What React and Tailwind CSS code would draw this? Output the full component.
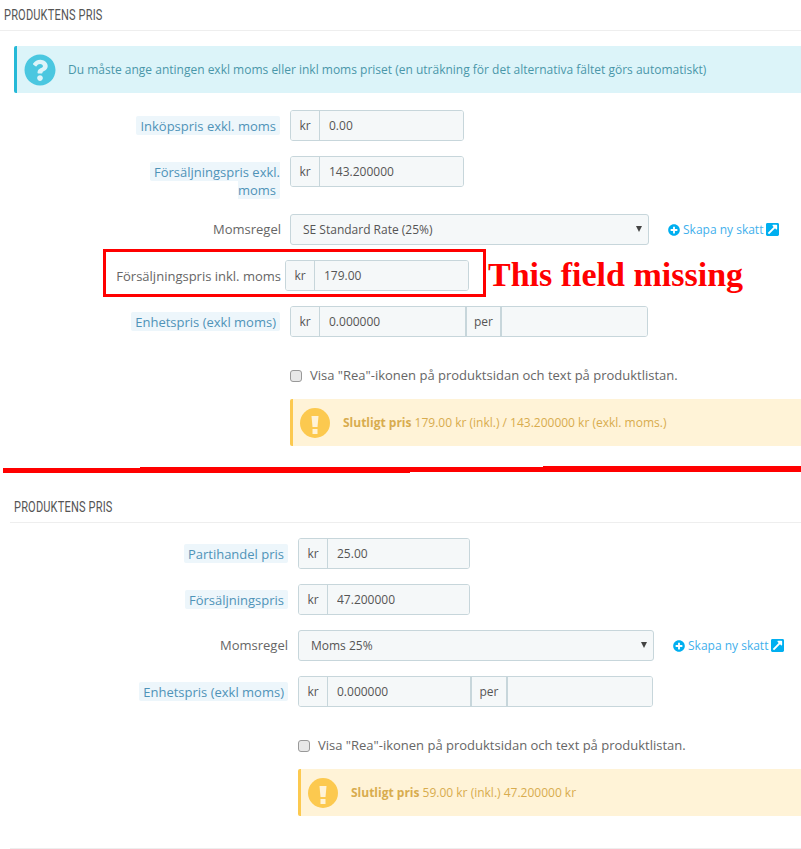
import { FaQuestionCircle, FaPlusCircle, FaExternalLinkSquareAlt } from 'react-icons/fa';

const font = { fontFamily: '"Open Sans", sans-serif' };

function Heading({ children }) {
    return (
        <div className="h-[31px] border-b border-[#eeeeee] pl-[4px] text-[14px] leading-[30px] tracking-[0.2px] text-[#555555] [font-family:'Roboto',sans-serif]">
            <span className="inline-block origin-left scale-x-[0.79]">{children}</span>
        </div>
    );
}

function HintLabel({ children }) {
    return (
        <div className="w-[160px] pt-[6px] text-right text-[13px] leading-[18px] text-[#4f93b8]">
            <span className="rounded-[2px] bg-[#edf6fb] px-[4px] py-[0.5px]">{children}</span>
        </div>
    );
}

function Addon({ children, className = '' }) {
    return (
        <span className={`flex items-center justify-center bg-[#f5f8f9] text-[12px] text-[#555555] ${className}`}>
            {children}
        </span>
    );
}

function PriceInput({ value, width }) {
    return (
        <div className={`flex h-[31px] overflow-hidden rounded-[3px] border border-[#c7d6db] ${width}`}>
            <Addon className="w-[29px] border-r border-[#c7d6db]">kr</Addon>
            <input
                readOnly
                value={value}
                className="min-w-0 flex-1 bg-[#f5f8f9] px-[9px] text-[12px] text-[#555555] outline-none"
            />
        </div>
    );
}

function UnitInput({ width, perWidth, lastWidth }) {
    return (
        <div className={`flex h-[31px] overflow-hidden rounded-[3px] border border-[#c7d6db] ${width}`}>
            <Addon className="w-[29px] border-r border-[#c7d6db]">kr</Addon>
            <input
                readOnly
                value="0.000000"
                className="min-w-0 flex-1 bg-[#f5f8f9] px-[9px] text-[12px] text-[#555555] outline-none"
            />
            <Addon className={`border-x-2 border-[#c7d6db] ${perWidth}`}>per</Addon>
            <input readOnly className={`bg-[#f5f8f9] outline-none ${lastWidth}`} />
        </div>
    );
}

function TaxSelect({ value, width }) {
    return (
        <div className={`relative h-[31px] ${width}`}>
            <select
                value={value}
                onChange={() => {}}
                className="h-full w-full appearance-none rounded-[3px] border border-[#c7d6db] bg-[#f5f8f9] pl-[12px] text-[12px] text-[#555555] outline-none"
            >
                <option>{value}</option>
            </select>
            <span className="absolute right-[7px] top-[12px] h-0 w-0 border-x-[3px] border-t-[6px] border-x-transparent border-t-[#444444]"></span>
        </div>
    );
}

function CreateTaxLink() {
    return (
        <a className="flex items-center text-[12px] text-[#3fb0ec]">
            <FaPlusCircle className="mr-[3px] h-[12px] w-[12px] text-[#00aff0]" />
            <span>Skapa ny skatt</span>
            <FaExternalLinkSquareAlt className="ml-[3px] h-[15px] w-[13px] text-[#00aff0]" />
        </a>
    );
}

function SaleCheckbox() {
    return (
        <label className="flex h-[20px] items-center text-[13px] text-[#666666]">
            <span className="mr-[8px] h-[12px] w-[12px] rounded-[3px] border border-[#999999] bg-[#e8e8e8]"></span>
            Visa "Rea"-ikonen på produktsidan och text på produktlistan.
        </label>
    );
}

function WarningIcon() {
    return (
        <svg viewBox="0 0 30 30" className="mr-[13px] h-[30px] w-[30px] shrink-0">
            <circle cx="15" cy="15" r="15" fill="#fcc94f" />
            <path d="M11.5 8H18.500L17.500 19H12.500Z" fill="#fff3d7" />
            <rect x="12.500" y="21" width="5" height="5" fill="#fff3d7" />
        </svg>
    );
}

function FinalPrice({ children }) {
    return (
        <div className="flex h-[47px] items-center rounded-l-[2px] border-l-[3px] border-[#fcc94f] bg-[#fff3d7] pl-[7px] text-[12px] text-[#d8ac4e]">
            <WarningIcon />
            <span>{children}</span>
        </div>
    );
}

export default function App() {
    return (
        <div style={font} className="h-[849px] w-full overflow-hidden bg-white">
            {/* Old version */}
            <section>
                <Heading>PRODUKTENS PRIS</Heading>

                <div className="ml-[14px] mt-[15px] flex h-[47px] items-center rounded-l-[2px] border-l-[3px] border-[#25b9d7] bg-[#dcf4f9] pl-[7px] text-[12px] text-[#4a97a9]">
                    <FaQuestionCircle className="mr-[12px] h-[32px] w-[32px] text-[#4ac7e0]" />
                    <span>Du måste ange antingen exkl moms eller inkl moms priset (en uträkning för det alternativa fältet görs automatiskt)</span>
                </div>

                <div className="mt-[17px] flex">
                    <div className="flex w-[280px] justify-end"><HintLabel>Inköpspris exkl. moms</HintLabel></div>
                    <div className="ml-[10px]"><PriceInput value="0.00" width="w-[174px]" /></div>
                </div>

                <div className="mt-[15px] flex">
                    <div className="flex w-[280px] justify-end"><HintLabel>Försäljningspris exkl. moms</HintLabel></div>
                    <div className="ml-[10px]"><PriceInput value="143.200000" width="w-[174px]" /></div>
                </div>

                <div className="mt-[16px] flex items-center">
                    <div className="w-[281px] text-right text-[13px] text-[#666666]">Momsregel</div>
                    <div className="ml-[9px]"><TaxSelect value="SE Standard Rate (25%)" width="w-[359px]" /></div>
                    <div className="ml-[19px]"><CreateTaxLink /></div>
                </div>

                <div className="ml-[103px] mt-[4px] flex items-center">
                    <div className="flex h-[48px] w-[383px] shrink-0 border-[3px] border-[#ff0000] pt-[8px]">
                        <div className="h-[31px] w-[175px] text-right text-[13px] leading-[33px] text-[#666666]">Försäljningspris inkl. moms</div>
                        <div className="ml-[4px]"><PriceInput value="179.00" width="w-[184px]" /></div>
                    </div>
                    <span className="ml-[2px] whitespace-nowrap pt-[4px] text-[34px] font-bold leading-none text-[#ff0000] [font-family:'Liberation_Serif',serif]">This field missing</span>
                </div>

                <div className="mt-[9px] flex">
                    <div className="flex w-[280px] justify-end"><HintLabel>Enhetspris (exkl moms)</HintLabel></div>
                    <div className="ml-[10px]"><UnitInput width="w-[358px]" perWidth="w-[37px]" lastWidth="w-[145px]" /></div>
                </div>

                <div className="ml-[290px] mt-[29px]"><SaleCheckbox /></div>

                <div className="ml-[290px] mt-[13px]">
                    <FinalPrice><b>Slutligt pris</b> 179.00 kr (inkl.) / 143.200000 kr (exkl. moms.)</FinalPrice>
                </div>
            </section>

            {/* Hand drawn divider */}
            <svg className="mt-[20px] block h-[7px] w-[801px]" viewBox="0 0 801 7">
                <path d="M3 2H140V1H543V0H801V6H410V7H3Z" fill="#ff0000" />
            </svg>

            {/* New version */}
            <section className="ml-[10px] mt-[19px]">
                <Heading>PRODUKTENS PRIS</Heading>

                <div className="mt-[15px] flex">
                    <div className="flex w-[278px] justify-end"><HintLabel>Partihandel pris</HintLabel></div>
                    <div className="ml-[10px]"><PriceInput value="25.00" width="w-[172px]" /></div>
                </div>

                <div className="mt-[15px] flex">
                    <div className="flex w-[278px] justify-end"><HintLabel>Försäljningspris</HintLabel></div>
                    <div className="ml-[10px]"><PriceInput value="47.200000" width="w-[172px]" /></div>
                </div>

                <div className="mt-[15px] flex items-center">
                    <div className="w-[278px] text-right text-[13px] text-[#666666]">Momsregel</div>
                    <div className="ml-[10px]"><TaxSelect value="Moms 25%" width="w-[356px]" /></div>
                    <div className="ml-[19px]"><CreateTaxLink /></div>
                </div>

                <div className="mt-[15px] flex">
                    <div className="flex w-[278px] justify-end"><HintLabel>Enhetspris (exkl moms)</HintLabel></div>
                    <div className="ml-[10px]"><UnitInput width="w-[355px]" perWidth="w-[38px]" lastWidth="w-[144px]" /></div>
                </div>

                <div className="ml-[288px] mt-[29px]"><SaleCheckbox /></div>

                <div className="ml-[288px] mt-[13px]">
                    <FinalPrice><b>Slutligt pris</b> 59.00 kr (inkl.) 47.200000 kr</FinalPrice>
                </div>

                <div className="mt-[32px] border-t border-[#eeeeee]"></div>
            </section>
        </div>
    );
}
